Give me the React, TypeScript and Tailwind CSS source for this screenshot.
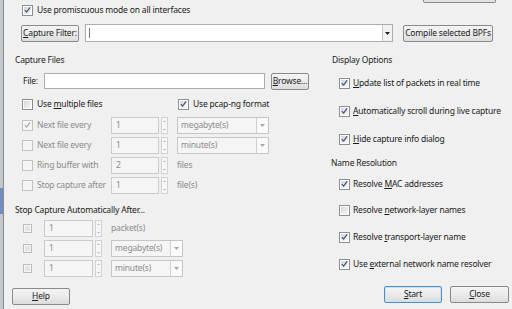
import type { ReactNode } from 'react';

const FONT = { fontFamily: '"Noto Sans", "Open Sans", sans-serif' };

function Mn({ children }: { children: ReactNode }) {
  return <span className="underline underline-offset-[1px]">{children}</span>;
}

function CheckBox({ checked = false, disabled = false }: { checked?: boolean; disabled?: boolean }) {
  return (
    <span
      className={`inline-flex h-[11px] w-[11px] shrink-0 items-center justify-center border p-px ${
        disabled ? 'border-[#c2c2c2] bg-[#f6f6f6]' : 'border-[#8e8f8f] bg-white'
      }`}
    >
      <span
        className={`flex h-full w-full items-center justify-center ${
          disabled ? 'bg-[#f4f4f4]' : 'bg-linear-to-br from-[#d6d6d6] to-[#f8f8f8]'
        }`}
      >
        {checked && (
          <svg width="8" height="8" viewBox="0 0 8 8">
            <path
              d="M1 4.2 L3 6.4 L7 1"
              fill="none"
              stroke={disabled ? '#a8a8a8' : '#3d5089'}
              strokeWidth="1.4"
            />
          </svg>
        )}
      </span>
    </span>
  );
}

function SmallCheck() {
  return (
    <span className="inline-flex h-[9px] w-[9px] shrink-0 items-center justify-center border border-[#bdbdbd] bg-[#f4f4f4]">
      <span className="h-[5px] w-[5px] bg-[#e4e4e4]" />
    </span>
  );
}

function Btn({ children, w, primary = false }: { children: ReactNode; w: string; primary?: boolean }) {
  return (
    <div
      className={`flex h-[17px] items-center justify-center whitespace-nowrap rounded-[2px] border bg-linear-to-b from-[#f4f4f4] via-[#ebebeb] to-[#dcdcdc] text-[#1b1b1b] ${w} ${
        primary ? 'border-[#4f8fc4] shadow-[inset_0_0_0_1px_#c4e3f6]' : 'border-[#8a8a8a]'
      }`}
    >
      {children}
    </div>
  );
}

function Spinner() {
  return (
    <div className="flex h-[17px] w-[7px] flex-col justify-between border border-[#d2d2d2] bg-[#f6f6f6]">
      <svg width="5" height="7" viewBox="0 0 5 7">
        <path d="M1 4 L2.5 2.5 L4 4 Z" fill="#b4b4b4" />
      </svg>
      <svg width="5" height="7" viewBox="0 0 5 7">
        <path d="M1 3 L2.5 4.5 L4 3 Z" fill="#b4b4b4" />
      </svg>
    </div>
  );
}

function SpinBox({ value, w }: { value: string; w: string }) {
  return (
    <div className="flex items-center gap-[2px]">
      <div className={`flex h-[17px] items-center border border-[#cbcbcb] bg-[#f5f5f5] pl-[4px] text-[#8c8c8c] ${w}`}>
        {value}
      </div>
      <Spinner />
    </div>
  );
}

function Combo({ value, w }: { value: string; w: string }) {
  return (
    <div className={`flex h-[17px] items-center border border-[#c6c6c6] bg-[#f5f5f5] text-[#8c8c8c] ${w}`}>
      <span className="flex-1 pl-[3px]">{value}</span>
      <span className="flex h-full w-[12px] items-center justify-center border-l border-[#d0d0d0] bg-[#fafafa]">
        <svg width="5" height="3" viewBox="0 0 5 3">
          <path d="M0 0 L5 0 L2.5 3 Z" fill="#a8a8a8" />
        </svg>
      </span>
    </div>
  );
}

function OptRow({ h, checked = true, children }: { h: string; checked?: boolean; children: ReactNode }) {
  return (
    <div className={`flex items-center gap-[3px] pl-[19px] ${h}`}>
      <CheckBox checked={checked} />
      <span>{children}</span>
    </div>
  );
}

export default function App() {
  return (
    <div
      className="flex h-[309px] w-[512px] overflow-hidden whitespace-nowrap bg-[#f0f0f0] text-[8.5px] leading-none tracking-[-0.18px] text-[#1a1a1a]"
      style={FONT}
    >
      {/* edge of the window behind */}
      <div className="flex w-[3px] flex-col bg-[#c4c8cd]">
        <div className="h-[188px]" />
        <div className="h-[26px] bg-[#6f8fc4]" />
      </div>
      <div className="w-px bg-[#8d8d8d]" />

      <div className="flex flex-1 flex-col">
        {/* cut-off button at the top */}
        <div className="flex h-[3px] justify-end pr-[16px]">
          <div className="w-[73px] rounded-b-[2px] border-x border-b border-[#8a8a8a] bg-[#e2e2e2]" />
        </div>

        <div className="flex h-[14px] items-center gap-[4px] pl-[18px]">
          <CheckBox checked />
          <span>Use promiscuous mode on all interfaces</span>
        </div>

        <div className="mt-[7px] flex h-[18px] items-center pl-[17px]">
          <Btn w="w-[58px]">
            <span>
              <Mn>C</Mn>apture Filter:
            </span>
          </Btn>
          <div className="ml-[6px] flex h-[18px] w-[308px] items-center border border-[#abadb3] bg-white">
            <span className="ml-[3px] h-[10px] w-px bg-[#7a7a7a]" />
            <span className="flex-1" />
            <span className="flex h-full w-[10px] items-center justify-center border-l border-[#c8c8c8] bg-[#f2f2f2]">
              <svg width="5" height="3" viewBox="0 0 5 3">
                <path d="M0 0 L5 0 L2.5 3 Z" fill="#222" />
              </svg>
            </span>
          </div>
          <div className="ml-[10px]">
            <Btn w="w-[90px]">Compile selected BPFs</Btn>
          </div>
        </div>

        <div className="flex flex-1">
          {/* left column */}
          <div className="flex w-[316px] flex-col">
            <div className="mt-[10px] flex h-[16px] items-center pl-[11px]">Capture Files</div>

            <div className="mt-[4px] flex h-[18px] items-center pl-[19px]">
              <span className="w-[21px]">File:</span>
              <div className="h-[16px] w-[221px] border border-[#abadb3] bg-white" />
              <div className="ml-[6px]">
                <Btn w="w-[38px]">
                  <span>
                    <Mn>B</Mn>rowse...
                  </span>
                </Btn>
              </div>
            </div>

            <div className="mt-[6px] flex h-[16px] items-center">
              <div className="flex w-[174px] items-center gap-[4px] pl-[18px]">
                <CheckBox />
                <span>
                  Use <Mn>m</Mn>ultiple files
                </span>
              </div>
              <div className="flex items-center gap-[4px]">
                <CheckBox checked />
                <span>Use pcap-ng format</span>
              </div>
            </div>

            <div className="mt-[3px] flex flex-col text-[#8c8c8c]">
              {[
                { label: 'Next file every', checked: true, value: '1', unit: 'megabyte(s)', combo: true },
                { label: 'Next file every', checked: false, value: '1', unit: 'minute(s)', combo: true },
                { label: 'Ring buffer with', checked: false, value: '2', unit: 'files', combo: false },
                { label: 'Stop capture after', checked: false, value: '1', unit: 'file(s)', combo: false },
              ].map((row, i) => (
                <div key={i} className="flex h-[20px] items-center">
                  <div className="flex w-[107px] items-center gap-[4px] pl-[18px]">
                    <CheckBox checked={row.checked} disabled />
                    <span>{row.label}</span>
                  </div>
                  <SpinBox value={row.value} w="w-[48px]" />
                  <div className="ml-[9px]">
                    {row.combo ? <Combo value={row.unit} w="w-[92px]" /> : <span>{row.unit}</span>}
                  </div>
                </div>
              ))}
            </div>

            <div className="mt-[7px] flex h-[16px] items-center pl-[11px]">Stop Capture Automatically After...</div>

            <div className="flex flex-col text-[#8c8c8c]">
              {[
                { unit: 'packet(s)', combo: false },
                { unit: 'megabyte(s)', combo: true },
                { unit: 'minute(s)', combo: true },
              ].map((row, i) => (
                <div key={i} className="flex h-[20px] items-center">
                  <div className="w-[40px] pl-[19px]">
                    <SmallCheck />
                  </div>
                  <SpinBox value="1" w="w-[49px]" />
                  <div className="ml-[9px]">
                    {row.combo ? <Combo value={row.unit} w="w-[72px]" /> : <span>{row.unit}</span>}
                  </div>
                </div>
              ))}
            </div>

            <div className="mt-[10px] pl-[8px]">
              <Btn w="w-[58px]">
                <span>
                  <Mn>H</Mn>elp
                </span>
              </Btn>
            </div>
          </div>

          {/* right column */}
          <div className="flex flex-1 flex-col">
            <div className="mt-[10px] flex h-[16px] items-center pl-[12px]">Display Options</div>
            <div className="mt-px flex flex-col">
              <OptRow h="h-[28px]">
                <Mn>U</Mn>pdate list of packets in real time
              </OptRow>
              <OptRow h="h-[28px]">
                <Mn>A</Mn>utomatically scroll during live capture
              </OptRow>
              <OptRow h="h-[28px]">
                <Mn>H</Mn>ide capture info dialog
              </OptRow>
            </div>
            <div className="mt-[2px] flex h-[16px] items-center pl-[11px]">Name Resolution</div>
            <div className="flex flex-col">
              <OptRow h="h-[26px]">
                Resolve <Mn>M</Mn>AC addresses
              </OptRow>
              <OptRow h="h-[26px]" checked={false}>
                Resolve <Mn>n</Mn>etwork-layer names
              </OptRow>
              <OptRow h="h-[28px]">
                Resolve <Mn>t</Mn>ransport-layer name
              </OptRow>
              <OptRow h="h-[26px]">
                Use <Mn>e</Mn>xternal network name resolver
              </OptRow>
            </div>
            <div className="mt-[9px] flex gap-[8px] pl-[64px]">
              <Btn w="w-[58px]" primary>
                <span>
                  <Mn>S</Mn>tart
                </span>
              </Btn>
              <Btn w="w-[59px]">
                <span>
                  <Mn>C</Mn>lose
                </span>
              </Btn>
            </div>
          </div>
        </div>
      </div>
    </div>
  );
}
